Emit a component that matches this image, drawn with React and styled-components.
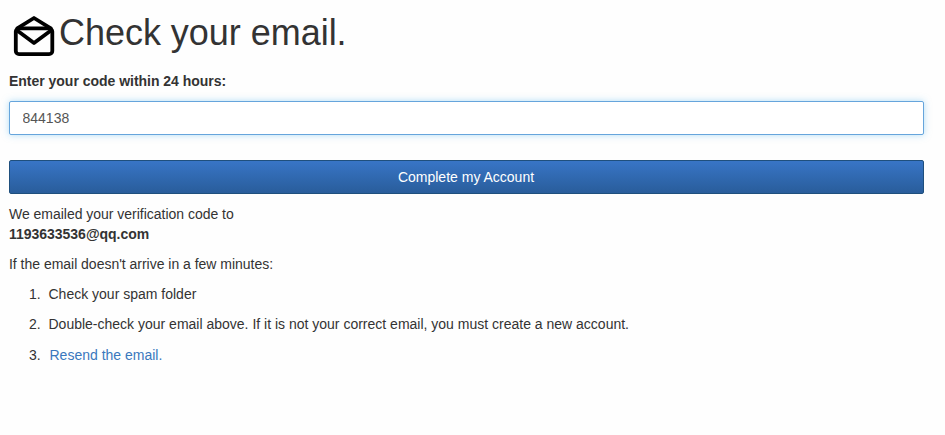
import React, { useState } from 'react';
import styled, { createGlobalStyle } from 'styled-components';

const GlobalStyle = createGlobalStyle`
  * {
    box-sizing: border-box;
  }

  body {
    margin: 0;
    background-color: #fefefe;
    color: #333333;
    font-family: "Helvetica Neue", Helvetica, Arial, "Liberation Sans", sans-serif;
    font-size: 14px;
    line-height: 20px;
  }
`;

const Page = styled.main`
  padding: 12px 21px 0 9px;
`;

const Header = styled.header`
  display: flex;
  align-items: center;
  height: 48px;
`;

const EnvelopeIcon = styled.svg`
  flex: none;
  width: 50px;
  height: 48px;
`;

const Title = styled.h1`
  margin: 0;
  padding-bottom: 6px;
  font-size: 36px;
  font-weight: 500;
  line-height: 40px;
  letter-spacing: -0.03px;
`;

const Form = styled.form`
  display: flex;
  flex-direction: column;
  margin: 0;
  padding-top: 11px;
`;

const Label = styled.label`
  margin-bottom: 10px;
  font-weight: bold;
  letter-spacing: -0.02px;
`;

const CodeInput = styled.input`
  width: 100%;
  height: 34px;
  margin-bottom: 25px;
  padding: 6px 12px 6px 12.5px;
  border: 1px solid #66a5dc;
  border-radius: 2px;
  outline: 0;
  background-color: #ffffff;
  box-shadow: 0 0 7px rgba(102, 190, 240, 0.5);
  color: #555555;
  font-family: inherit;
  font-size: 14px;
`;

const SubmitButton = styled.button`
  width: 100%;
  height: 34px;
  padding: 6px 13px 6px 12px;
  border: 1px solid #1f4f7d;
  border-radius: 2px;
  background-image: linear-gradient(to bottom, #3875c6 0%, #295d9b 100%);
  color: #ffffff;
  font-family: inherit;
  font-size: 14px;
  line-height: 20px;
  cursor: pointer;
`;

const Text = styled.p`
  margin: 10px 0 0;
  letter-spacing: -0.02px;
`;

const Steps = styled.ol`
  display: flex;
  flex-direction: column;
  gap: 10px;
  margin: 10px 0 0;
  padding-left: 35.5px;
`;

const Step = styled.li`
  height: 20px;
  padding-left: 4px;
`;

const ResendLink = styled.a`
  display: inline-block;
  padding: 1px 0 0 1px;
  color: #3a78bd;
  text-decoration: none;
`;

const App = () => {
  const [code, setCode] = useState('844138');

  return (
    <>
      <GlobalStyle />
      <Page>
        <Header>
          <EnvelopeIcon viewBox="0 0 50 48" fill="none" stroke="#000000" strokeWidth="3.8" strokeLinejoin="round">
            <rect x="6.8" y="16.3" width="36.5" height="25.8" rx="3.2" />
            <path d="M7.5 16.8 L25 6 L42.6 16.8" />
            <path d="M7.5 18 L25 31 L42.6 18" />
          </EnvelopeIcon>
          <Title>Check your email.</Title>
        </Header>
        <Form onSubmit={event => event.preventDefault()}>
          <Label htmlFor="code">Enter your code within 24 hours:</Label>
          <CodeInput id="code" value={code} onChange={event => setCode(event.target.value)} />
          <SubmitButton type="submit">Complete my Account</SubmitButton>
        </Form>
        <Text>
          We emailed your verification code to<br />
          <strong>1193633536@qq.com</strong>
        </Text>
        <Text>If the email doesn't arrive in a few minutes:</Text>
        <Steps>
          <Step>Check your spam folder</Step>
          <Step>Double-check your email above. If it is not your correct email, you must create a new account.</Step>
          <Step><ResendLink href="#">Resend the email.</ResendLink></Step>
        </Steps>
      </Page>
    </>
  );
};

export default App;
